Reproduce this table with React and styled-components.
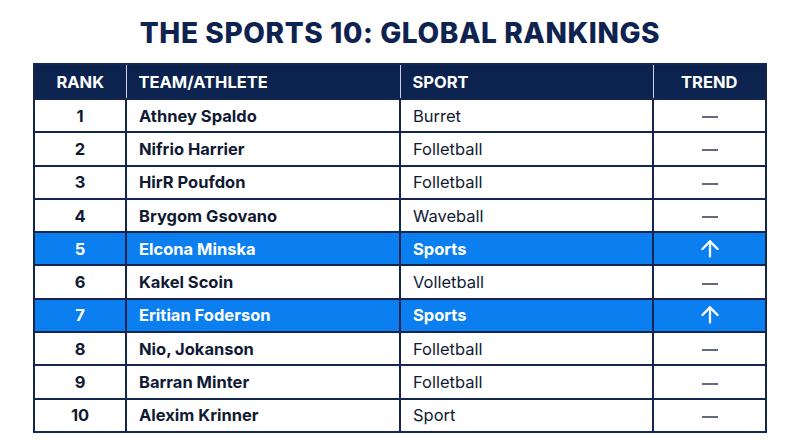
import styled, { createGlobalStyle } from "styled-components";
import { ArrowUp } from "lucide-react";

const GlobalStyle = createGlobalStyle`
  body {
    margin: 0;
    background: #ffffff;
    font-family: "Inter", "Liberation Sans", sans-serif;
  }
`;

const Page = styled.div`
  width: 800px;
  height: 447px;
  padding-top: 15px;
  box-sizing: border-box;
  display: flex;
  flex-direction: column;
  align-items: center;
`;

const Title = styled.h1`
  margin: 0 0 12px;
  font-size: 28px;
  line-height: 36px;
  font-weight: 800;
  letter-spacing: 0.6px;
  color: #0f2350;
`;

const Table = styled.table`
  width: 732px;
  border-collapse: collapse;
  table-layout: fixed;
  border: 2px solid #14264f;
`;

const HeadCell = styled.th`
  height: 33px;
  background: #0c2350;
  color: #ffffff;
  font-size: 16.5px;
  font-weight: 700;
  text-align: ${(p) => (p.$center ? "center" : "left")};
  padding: 0 ${(p) => (p.$center ? "0" : "12px")};
  border-left: 1px solid #c9d1e2;
  &:first-child {
    border-left: none;
  }
`;

const Row = styled.tr`
  height: 33.3px;
  background: ${(p) => (p.$hot ? "#0b7ff0" : "#ffffff")};
  color: ${(p) => (p.$hot ? "#ffffff" : "#111a33")};
`;

const Cell = styled.td`
  border: 2px solid #14264f;
  font-size: 16.5px;
  font-weight: ${(p) => (p.$bold ? 700 : 400)};
  text-align: ${(p) => (p.$center ? "center" : "left")};
  padding: 0 ${(p) => (p.$center ? "0" : "12px")};
  vertical-align: middle;
`;

const Dash = styled.span`
  display: inline-block;
  width: 16px;
  height: 2px;
  background: #656b7c;
  vertical-align: middle;
`;

const Arrow = styled(ArrowUp)`
  display: inline-block;
  vertical-align: middle;
  color: #ffffff;
`;

const rows = [
  { rank: 1, name: "Athney Spaldo", sport: "Burret" },
  { rank: 2, name: "Nifrio Harrier", sport: "Folletball" },
  { rank: 3, name: "HirR Poufdon", sport: "Folletball" },
  { rank: 4, name: "Brygom Gsovano", sport: "Waveball" },
  { rank: 5, name: "Elcona Minska", sport: "Sports", hot: true },
  { rank: 6, name: "Kakel Scoin", sport: "Volletball" },
  { rank: 7, name: "Eritian Foderson", sport: "Sports", hot: true },
  { rank: 8, name: "Nio, Jokanson", sport: "Folletball" },
  { rank: 9, name: "Barran Minter", sport: "Folletball" },
  { rank: 10, name: "Alexim Krinner", sport: "Sport" },
];

export default function App() {
  return (
    <Page>
      <GlobalStyle />
      <Title>THE SPORTS 10: GLOBAL RANKINGS</Title>
      <Table>
        <colgroup>
          <col style={{ width: 92 }} />
          <col style={{ width: 274 }} />
          <col style={{ width: 253 }} />
          <col style={{ width: 113 }} />
        </colgroup>
        <thead>
          <tr>
            <HeadCell $center>RANK</HeadCell>
            <HeadCell>TEAM/ATHLETE</HeadCell>
            <HeadCell>SPORT</HeadCell>
            <HeadCell $center>TREND</HeadCell>
          </tr>
        </thead>
        <tbody>
          {rows.map((r) => (
            <Row key={r.rank} $hot={r.hot}>
              <Cell $center $bold>{r.rank}</Cell>
              <Cell $bold>{r.name}</Cell>
              <Cell $bold={r.hot}>{r.sport}</Cell>
              <Cell $center>
                {r.hot ? <Arrow size={26} strokeWidth={2.1} /> : <Dash />}
              </Cell>
            </Row>
          ))}
        </tbody>
      </Table>
    </Page>
  );
}
